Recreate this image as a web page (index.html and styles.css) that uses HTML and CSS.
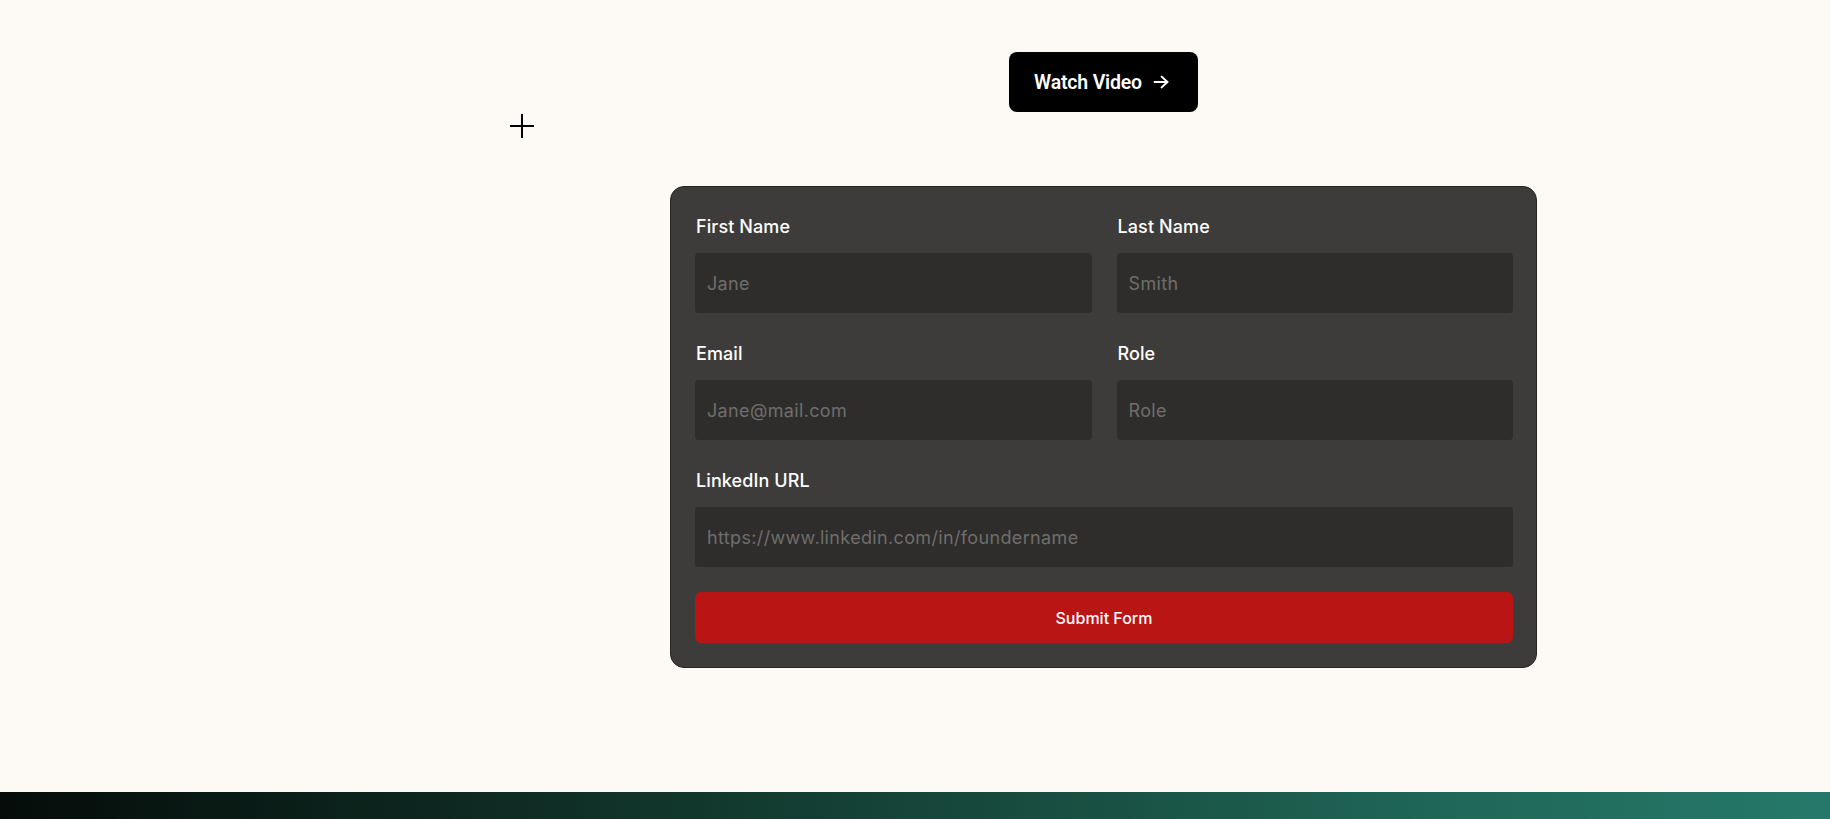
FILE: index.html
```html
<!DOCTYPE html>
<html lang="en">
<head>
    <meta charset="UTF-8">
    <meta name="viewport" content="width=device-width, initial-scale=1.0">
    <title>Apply</title>
    <link rel="stylesheet" href="styles.css">
</head>
<body>
    <main class="stage">
        <!-- decorative cross marker -->
        <span class="cross" aria-hidden="true"></span>

        <div class="column">
            <a class="watch-btn" href="#video">
                Watch Video
                <svg width="16" height="14" viewBox="0 0 16 14" fill="none" stroke="currentColor" stroke-width="1.8" stroke-linecap="round" stroke-linejoin="round">
                    <path d="M1.5 7h13"/>
                    <path d="M8.5 1.5L14.5 7l-6 5.5"/>
                </svg>
            </a>

            <form class="apply-form" onsubmit="return false;">
                <div class="fields">
                    <div class="field">
                        <label for="first">First Name</label>
                        <input id="first" type="text" placeholder="Jane">
                    </div>
                    <div class="field">
                        <label for="last">Last Name</label>
                        <input id="last" type="text" placeholder="Smith">
                    </div>
                    <div class="field">
                        <label for="email">Email</label>
                        <input id="email" type="email" placeholder="Jane@mail.com">
                    </div>
                    <div class="field">
                        <label for="role">Role</label>
                        <input id="role" type="text" placeholder="Role">
                    </div>
                    <div class="field wide">
                        <label for="linkedin">LinkedIn URL</label>
                        <input id="linkedin" type="url" placeholder="https://www.linkedin.com/in/foundername">
                    </div>
                </div>
                <button type="submit" class="submit-btn">Submit Form</button>
            </form>
        </div>
    </main>

    <section class="band"></section>
</body>
</html>
```

FILE: styles.css
```css
body {
    font-family: 'Inter', 'Noto Sans', sans-serif;
    margin: 0;
    padding: 0;
    background: #fdf9f4;
    color: #1a1a1a;
    overflow: hidden;
}

.stage {
    position: relative;
    display: flex;
    padding: 52px 0 124px 377px;
}

.cross {
    position: absolute;
    left: 510px;
    top: 114px;
    width: 24px;
    height: 24px;
}

.cross::before,
.cross::after {
    content: "";
    position: absolute;
    background: #000;
}

.cross::before {
    left: 0;
    top: 11px;
    width: 24px;
    height: 2px;
}

.cross::after {
    left: 11px;
    top: 0;
    width: 2px;
    height: 24px;
}

.column {
    flex: 1;
    display: flex;
    flex-direction: column;
    align-items: center;
}

.watch-btn {
    display: inline-flex;
    align-items: center;
    gap: 11px;
    height: 60px;
    box-sizing: border-box;
    padding: 0 29px 0 25px;
    background: #000;
    color: #fff;
    border-radius: 8px;
    text-decoration: none;
    font-family: 'Roboto', 'Liberation Sans', sans-serif;
    font-size: 19.5px;
    font-weight: 600;
    letter-spacing: -0.2px;
}

.apply-form {
    width: 867px;
    box-sizing: border-box;
    margin-top: 74px;
    padding: 29px 23px 24px 24px;
    background: #3d3c3a;
    border: 1px solid #262524;
    border-radius: 14px;
}

.fields {
    display: grid;
    grid-template-columns: 1fr 1fr;
    column-gap: 25px;
    row-gap: 30px;
}

.field {
    display: flex;
    flex-direction: column;
}

.field.wide {
    grid-column: 1 / -1;
}

.field label {
    color: #fff;
    font-size: 18px;
    font-weight: 500;
    line-height: 22px;
    margin-bottom: 15px;
    padding-left: 1px;
    letter-spacing: 0.1px;
}

.field input {
    height: 60px;
    box-sizing: border-box;
    padding: 0 12px;
    background: #2e2d2b;
    border: none;
    border-radius: 4px;
    color: #fff;
    font-family: inherit;
    font-size: 18px;
    letter-spacing: 0.35px;
    outline: none;
}

.field input::placeholder {
    color: #6f6e6b;
}

.submit-btn {
    display: block;
    width: 100%;
    height: 51px;
    margin-top: 25px;
    background: #b81514;
    color: #fff;
    border: none;
    border-radius: 6px;
    font-family: inherit;
    font-size: 16px;
    font-weight: 500;
    cursor: pointer;
}

.band {
    height: 120px;
    background: linear-gradient(90deg, #050c0a 0%, #0f2e25 30%, #174b3e 55%, #1f6656 78%, #26796a 100%);
}
```
